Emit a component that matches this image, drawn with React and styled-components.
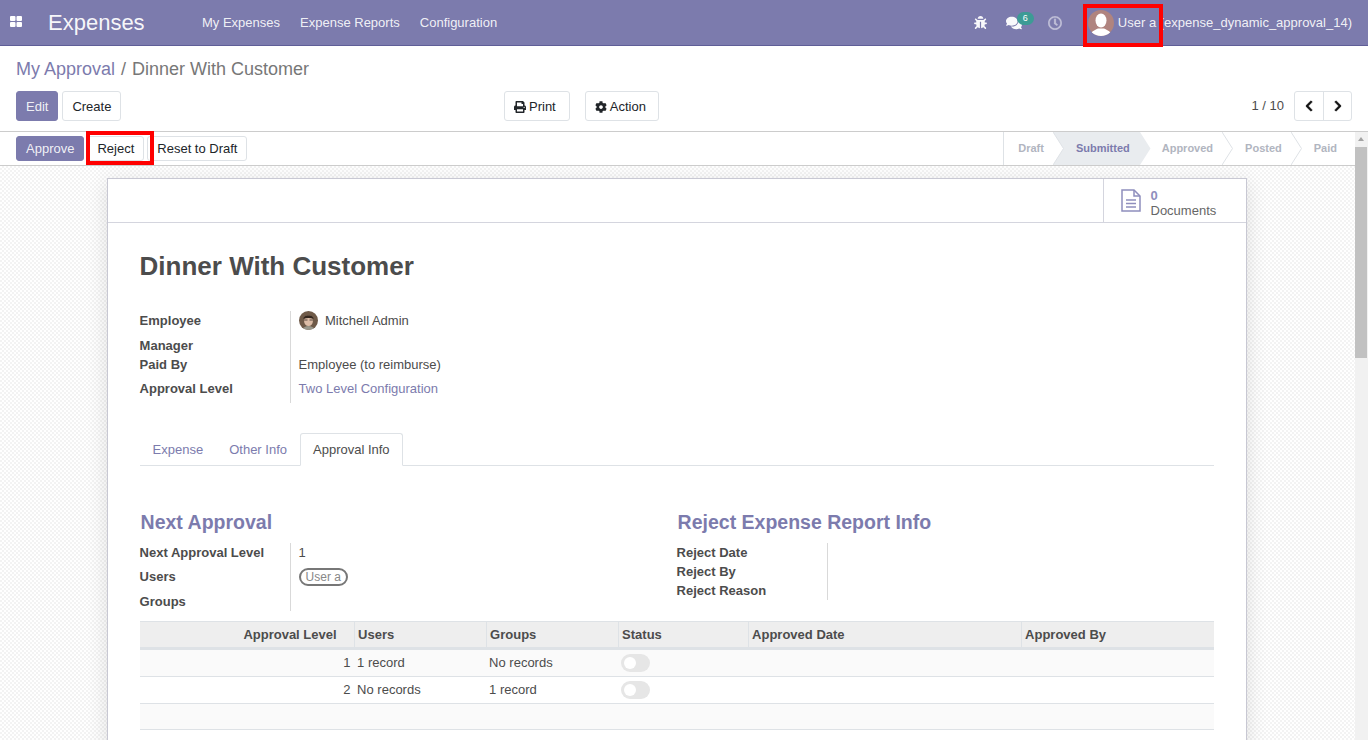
import React from "react";
import styled, { createGlobalStyle } from "styled-components";
import { FaBug, FaComments, FaRegClock, FaPrint, FaCog, FaChevronLeft, FaChevronRight } from "react-icons/fa";

const Global = createGlobalStyle`
  html, body { margin: 0; height: 100%; overflow: hidden; background: #fff; }
  body { font-family: "Liberation Sans", Arial, sans-serif; font-size: 13px; color: #4c4c4c; line-height: 19.5px; }
  * { box-sizing: border-box; }
`;

const Page = styled.div`display: flex; flex-direction: column; height: 740px; width: 1368px; overflow: hidden; position: relative;`;

const Navbar = styled.header`
  height: 46px; flex: none; background: #7c7bad; border-bottom: 1px solid #5f5e97;
  display: flex; align-items: center; color: rgba(255,255,255,.9); position: relative;
`;
const AppsIcon = styled.svg`width: 12px; height: 11px; fill: #fff; margin: -2px 0 0 10px; flex: none;`;
const Brand = styled.span`font-size: 22px; margin-left: 26px; width: 154px; color: rgba(255,255,255,.95);`;
const Menu = styled.nav`display: flex; gap: 20px;`;
const MenuItem = styled.span`font-size: 13px;`;
const Systray = styled.div`margin-left: auto; display: flex; align-items: center; padding-right: 16px;`;
const TrayIcon = styled.span`
  display: flex; color: ${p => p.$dim ? "rgba(255,255,255,.5)" : "rgba(255,255,255,.95)"}; margin-right: ${p => p.$gap}px; position: relative;
  svg { width: ${p => p.$size}px; height: ${p => p.$size}px; ${p => p.$dim && "stroke: currentColor; stroke-width: 14;"} }
`;
const Badge = styled.span`
  position: absolute; left: 11px; top: -3px; width: 17px; height: 13px; border-radius: 7px; background: #3d9b95;
  color: #fff; font-size: 9px; line-height: 13px; text-align: center;
`;
const UserPic = styled.svg`width: 26px; height: 26px; border-radius: 50%; margin-right: 4px; flex: none;`;
const HighlightBox = styled.div`
  position: absolute; border: 4px solid #f00; pointer-events: none; z-index: 5;
  left: ${p => p.$x}px; top: ${p => p.$y}px; width: ${p => p.$w}px; height: ${p => p.$h}px;
`;

const ControlPanel = styled.section`
  height: 86px; flex: none; padding: 12px 16px 0; border-bottom: 1px solid #ccc; background: #fff;
`;
const Breadcrumb = styled.div`font-size: 18px; line-height: 22px; color: #777; display: flex; gap: 6px;`;
const Crumb = styled.span`color: ${p => p.$link ? "#7c7bad" : "#777"};`;
const ControlRow = styled.div`display: flex; align-items: center; margin-top: 11px; height: 30px;`;
const LeftGroup = styled.div`display: flex; gap: 4px; width: 488px;`;
const MidGroup = styled.div`display: flex; gap: 15px;`;
const Btn = styled.button`
  font: 13px/19.5px "Liberation Sans", Arial, sans-serif; height: ${p => p.$small ? 25 : 30}px;
  padding: ${p => p.$small ? 0 : "1px"} ${p => p.$padRight || 9}px 0 9px;
  border-radius: 3px; display: inline-flex; align-items: center; gap: 3px; cursor: pointer; white-space: nowrap;
  border: 1px solid ${p => p.$primary ? "#7c7bad" : "#dee2e6"};
  background: ${p => p.$primary ? "#7c7bad" : "#fff"};
  color: ${p => p.$primary ? "rgba(255,255,255,.9)" : "#212529"};
  svg { width: 12px; height: 12px; }
`;
const Pager = styled.div`margin-left: auto; display: flex; align-items: center; gap: 10px; color: #4c4c4c;`;
const PagerButtons = styled.div`display: flex; border: 1px solid #dee2e6; border-radius: 3px; height: 30px;`;
const PagerBtn = styled.span`
  width: 28px; display: flex; align-items: center; justify-content: center; color: #111;
  & + & { border-left: 1px solid #dee2e6; }
  svg { width: 12px; height: 12px; stroke: currentColor; stroke-width: 24; }
`;

const Body = styled.div`flex: 1; display: flex; min-height: 0;`;
const Main = styled.div`flex: 1; min-width: 0; display: flex; flex-direction: column;`;
const Scrollbar = styled.div`width: 13px; flex: none; background: #f1f1f1; position: relative; padding: 15px 1px 0 0;`;
const ScrollArrow = styled.span`
  position: absolute; top: 5px; left: 3px; width: 0; height: 0;
  border-left: 3.5px solid transparent; border-right: 3.5px solid transparent; border-bottom: 4px solid #a3a3a3;
`;
const ScrollThumb = styled.div`height: 211px; background: #c1c1c1;`;

const StatusBar = styled.div`
  height: 34px; flex: none; display: flex; align-items: center; justify-content: space-between;
  padding-left: 16px; border-bottom: 1px solid #ccc; background: #fff;
`;
const StatusButtons = styled.div`display: flex; gap: 3px;`;
const Steps = styled.div`display: flex; height: 33px; border-left: 1px solid #dee2e6;`;
const Step = styled.div`
  position: relative; font-size: 11px; font-weight: 700; line-height: 33px;
  padding: 0 ${p => p.$right}px 0 ${p => p.$left}px;
  color: ${p => p.$active ? "#7c7bad" : "#b1b5c0"};
  background: ${p => p.$active ? "#e9ecef" : "#fff"};
`;
const StepArrow = styled.svg`
  position: absolute; left: 100%; top: 0; width: 11px; height: 33px; z-index: 1;
  path { fill: ${p => p.$active ? "#e9ecef" : "#fff"}; stroke: ${p => p.$active ? "none" : "#dee2e6"}; stroke-width: 1; }
`;

const Content = styled.div`
  flex: 1; min-height: 0; overflow: hidden; padding: 12px 107px 0 107px;
  background-color: #fff;
  background-image: repeating-conic-gradient(#f3f3f3 0 25%, #fff 0 50%);
  background-size: 4px 4px;
`;
const Sheet = styled.article`
  width: 1140px; background: #fff; border: 1px solid #c8c8d3; height: 700px;
  box-shadow: 0 5px 20px rgba(0,0,0,.12);
`;
const ButtonBox = styled.div`height: 44px; border-bottom: 1px solid #d4d5de; display: flex; justify-content: flex-end;`;
const DocButton = styled.div`
  width: 143px; border-left: 1px solid #d4d5de; display: flex; align-items: center; padding-left: 17px; gap: 9.5px;
`;
const DocIcon = styled.svg`width: 20px; height: 23px; flex: none;`;
const DocText = styled.div`display: flex; flex-direction: column; line-height: 15px; padding-top: 4px;`;
const DocCount = styled.b`color: #8f8ebd; font-size: 13px;`;
const DocLabel = styled.span`color: #666; font-size: 13px;`;

const SheetBody = styled.div`padding: 24px 32px 0 31.6px;`;
const Title = styled.h1`font-size: 26px; line-height: 39px; font-weight: 700; margin: 0 0 25px; color: #4c4c4c;`;
const FieldGrid = styled.div`display: grid; grid-template-columns: 150.4px 1fr; grid-template-rows: ${p => p.$rows}; width: fit-content; min-width: 300px;`;
const Label = styled.div`font-weight: 700; color: #4c4c4c; white-space: nowrap;`;
const Value = styled.div`
  border-left: 1px solid #d9d9d9; padding-left: 7.6px; color: ${p => p.$link ? "#7c7bad" : "#4c4c4c"};
  display: flex; align-items: flex-start; gap: 7.4px; white-space: nowrap;
`;
const EmployeePic = styled.svg`width: 19px; height: 19px; border-radius: 50%; flex: none;`;

const Tabs = styled.div`display: flex; height: 33px; margin-top: 30px; border-bottom: 1px solid #dee2e6;`;
const Tab = styled.div`
  padding: 7px 13px 5px; height: 33px; color: ${p => p.$active ? "#4c4c4c" : "#7c7bad"};
  ${p => p.$active && `background:#fff;border:1px solid #dee2e6;border-bottom-color:#fff;border-radius:3px 3px 0 0;padding:6px 12px;`}
`;
const TwoCols = styled.div`display: grid; grid-template-columns: 537px 537px; margin-top: 41px;`;
const GroupTitle = styled.h2`font-size: 19.5px; line-height: 30px; font-weight: 700; color: #7c7bad; margin: 0 0 6px 1px;`;
const Pill = styled.span`
  border: 2px solid #777; border-radius: 9px; height: 18px; line-height: 14px; padding: 0 5px; font-size: 12px; color: #888;
  margin-top: 1px;
`;

const Table = styled.table`border-collapse: separate; border-spacing: 0; table-layout: fixed; width: 1074px; margin-top: 10px;`;
const Th = styled.th`
  background: #eee; height: 29px; font-size: 13px; font-weight: 700; color: #4c4c4c; padding: 0 3px 0 3.5px;
  text-align: ${p => p.$right ? "right" : "left"};
  ${p => p.$right && "padding-right: 17px;"}
  border-top: 1px solid #dee2e6; border-bottom: 3px solid #dee2e6;
  & + & { border-left: 1px solid #dee2e6; }
`;
const Tr = styled.tr`background: ${p => p.$odd ? "#fafafa" : "#fff"};`;
const Td = styled.td`
  height: ${p => p.$h || 27}px; padding: 0 3px 0 3.5px; border-bottom: 1px solid #dee2e6; color: #4c4c4c;
  text-align: ${p => p.$right ? "right" : "left"};
`;
const Toggle = styled.span`
  display: block; width: 29px; height: 18px; border-radius: 9px; background: #e6e6e6; position: relative; margin-top: -1px;
  &::after { content: ""; position: absolute; left: 3px; top: 3px; width: 12px; height: 12px; border-radius: 50%; background: #fff; }
`;

const arrow = "M0 0L10.5 16.5L0 33";

const columns = [214, 132, 132, 130, 273, 193];

const rows = [
  { n: 1, users: "1 record", groups: "No records" },
  { n: 2, users: "No records", groups: "1 record" },
];

export default function App() {
  return (
    <Page>
      <Global />
      <Navbar>
        <AppsIcon viewBox="0 0 12 11">
          <rect x="0" y="0" width="5.500" height="5" rx="1" />
          <rect x="6.500" y="0" width="5.500" height="5" rx="1" />
          <rect x="0" y="6" width="5.500" height="5" rx="1" />
          <rect x="6.500" y="6" width="5.500" height="5" rx="1" />
        </AppsIcon>
        <Brand>Expenses</Brand>
        <Menu>
          <MenuItem>My Expenses</MenuItem>
          <MenuItem>Expense Reports</MenuItem>
          <MenuItem>Configuration</MenuItem>
        </Menu>
        <Systray>
          <TrayIcon $size={13} $gap={19}><FaBug /></TrayIcon>
          <TrayIcon $size={16} $gap={26}><FaComments /><Badge>6</Badge></TrayIcon>
          <TrayIcon $size={14} $gap={26} $dim><FaRegClock /></TrayIcon>
          <UserPic viewBox="0 0 26 26">
            <rect width="26" height="26" fill="#b0847f" />
            <ellipse cx="13" cy="10.500" rx="5.500" ry="7" fill="#fff" />
            <path d="M2 26c0-4 5-6 8-7.500h6c3 1.500 8 3.500 8 7.500z" fill="#fff" />
          </UserPic>
          <span>User a (expense_dynamic_approval_14)</span>
        </Systray>
      </Navbar>
      <ControlPanel>
        <Breadcrumb><Crumb $link>My Approval</Crumb><span>/</span><Crumb>Dinner With Customer</Crumb></Breadcrumb>
        <ControlRow>
          <LeftGroup>
            <Btn $primary>Edit</Btn>
            <Btn>Create</Btn>
          </LeftGroup>
          <MidGroup>
            <Btn $padRight={13}><FaPrint />Print</Btn>
            <Btn $padRight={12}><FaCog />Action</Btn>
          </MidGroup>
          <Pager>
            <span>1 / 10</span>
            <PagerButtons>
              <PagerBtn><FaChevronLeft /></PagerBtn>
              <PagerBtn><FaChevronRight /></PagerBtn>
            </PagerButtons>
          </Pager>
        </ControlRow>
      </ControlPanel>
      <Body>
        <Main>
          <StatusBar>
            <StatusButtons>
              <Btn $primary $small>Approve</Btn>
              <Btn $small>Reject</Btn>
              <Btn $small>Reset to Draft</Btn>
            </StatusButtons>
            <Steps>
              <Step $left={14} $right={9}>Draft<StepArrow viewBox="0 0 11 33"><path d={arrow} /></StepArrow></Step>
              <Step $left={23} $right={10} $active>Submitted<StepArrow viewBox="0 0 11 33" $active><path d={arrow} /></StepArrow></Step>
              <Step $left={22} $right={9}>Approved<StepArrow viewBox="0 0 11 33"><path d={arrow} /></StepArrow></Step>
              <Step $left={23} $right={9}>Posted<StepArrow viewBox="0 0 11 33"><path d={arrow} /></StepArrow></Step>
              <Step $left={23} $right={18}>Paid</Step>
            </Steps>
          </StatusBar>
          <Content>
            <Sheet>
              <ButtonBox>
                <DocButton>
                  <DocIcon viewBox="0 0 20 23" fill="none" stroke="#8f8ebd" strokeWidth="1.500">
                    <path d="M1 1h12l6 6v15H1z" />
                    <path d="M13 1v6h6M5 11h10M5 14.500h10M5 18h10" />
                  </DocIcon>
                  <DocText><DocCount>0</DocCount><DocLabel>Documents</DocLabel></DocText>
                </DocButton>
              </ButtonBox>
              <SheetBody>
                <Title>Dinner With Customer</Title>
                <FieldGrid $rows="25px 19px 24px 24px">
                  <Label>Employee</Label>
                  <Value>
                    <EmployeePic viewBox="0 0 19 19">
                      <rect width="19" height="19" fill="#6f5a48" />
                      <ellipse cx="9.500" cy="9.500" rx="4.500" ry="5.500" fill="#dcbca6" />
                      <path d="M4.500 8c0-5 10-5 10 0-3-1.500-7-1.500-10 0z" fill="#33261d" />
                      <path d="M5 9h3.500M10.500 9H14" stroke="#5a4a40" strokeWidth="1" />
                      <path d="M3 19c1-3 4-4 6.500-4s5.500 1 6.500 4z" fill="#9a988c" />
                    </EmployeePic>
                    Mitchell Admin
                  </Value>
                  <Label>Manager</Label>
                  <Value />
                  <Label>Paid By</Label>
                  <Value>Employee (to reimburse)</Value>
                  <Label>Approval Level</Label>
                  <Value $link>Two Level Configuration</Value>
                </FieldGrid>
                <Tabs>
                  <Tab>Expense</Tab>
                  <Tab>Other Info</Tab>
                  <Tab $active>Approval Info</Tab>
                </Tabs>
                <TwoCols>
                  <div>
                    <GroupTitle>Next Approval</GroupTitle>
                    <FieldGrid $rows="24px 25px 19px">
                      <Label>Next Approval Level</Label>
                      <Value>1</Value>
                      <Label>Users</Label>
                      <Value><Pill>User a</Pill></Value>
                      <Label>Groups</Label>
                      <Value />
                    </FieldGrid>
                  </div>
                  <div>
                    <GroupTitle>Reject Expense Report Info</GroupTitle>
                    <FieldGrid $rows="19px 19px 19px">
                      <Label>Reject Date</Label>
                      <Value />
                      <Label>Reject By</Label>
                      <Value />
                      <Label>Reject Reason</Label>
                      <Value />
                    </FieldGrid>
                  </div>
                </TwoCols>
                <Table>
                  <colgroup>
                    {columns.map((w, i) => <col key={i} style={{ width: w }} />)}
                  </colgroup>
                  <thead>
                    <tr>
                      <Th $right>Approval Level</Th>
                      <Th>Users</Th>
                      <Th>Groups</Th>
                      <Th>Status</Th>
                      <Th>Approved Date</Th>
                      <Th>Approved By</Th>
                    </tr>
                  </thead>
                  <tbody>
                    {rows.map(r => (
                      <Tr key={r.n} $odd={r.n === 1}>
                        <Td $right>{r.n}</Td>
                        <Td>{r.users}</Td>
                        <Td>{r.groups}</Td>
                        <Td><Toggle /></Td>
                        <Td />
                        <Td />
                      </Tr>
                    ))}
                    <Tr $odd>
                      <Td $h={26} /><Td $h={26} /><Td $h={26} /><Td $h={26} /><Td $h={26} /><Td $h={26} />
                    </Tr>
                  </tbody>
                </Table>
              </SheetBody>
            </Sheet>
          </Content>
        </Main>
        <Scrollbar>
          <ScrollArrow />
          <ScrollThumb />
        </Scrollbar>
      </Body>
      <HighlightBox $x={1083} $y={4} $w={80} $h={43} />
      <HighlightBox $x={86} $y={131} $w={68} $h={34} />
    </Page>
  );
}
